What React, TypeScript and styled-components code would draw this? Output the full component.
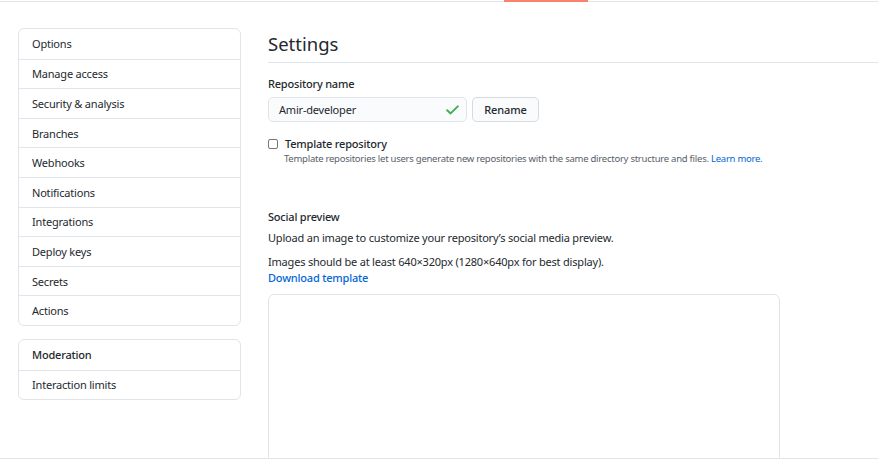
import React from "react";
import styled, { createGlobalStyle } from "styled-components";

const Global = createGlobalStyle`
  html, body { margin: 0; padding: 0; background: #fff; }
  body {
    font-family: "Noto Sans", "Open Sans", "Liberation Sans", sans-serif;
    color: #24292e;
    -webkit-font-smoothing: antialiased;
  }
  * { box-sizing: border-box; }
`;

const Page = styled.div`
  width: 878px;
  height: 459px;
  border-bottom: 1px solid #e1e4e8;
  overflow: hidden;
`;

const TopBar = styled.div`
  display: flex;
  height: 2px;
  padding-left: 504px;
  box-shadow: inset 0 -1px 0 #e1e4e8;
`;

const TabIndicator = styled.div`
  width: 84px;
  height: 2px;
  background: #f9826c;
`;

const Layout = styled.div`
  display: flex;
  align-items: flex-start;
  gap: 27px;
  padding: 26px 0 0 18px;
`;

const Sidebar = styled.nav`
  width: 223px;
  flex: none;
  display: flex;
  flex-direction: column;
  gap: 13px;
`;

const MenuBox = styled.div`
  border: 1px solid #e1e4e8;
  border-radius: 6px;
  overflow: hidden;
`;

const MenuItem = styled.div<{ $heading?: boolean }>`
  height: 29.6px;
  display: flex;
  align-items: center;
  padding-left: 13px;
  font-size: 11px;
  letter-spacing: -0.2px;
  font-weight: ${(p) => (p.$heading ? 500 : 400)};
  color: #24292e;
  & + & { border-top: 1px solid #e1e4e8; }
`;

const Content = styled.main`
  flex: 1;
  min-width: 0;
`;

const Title = styled.h2`
  margin: 0;
  font-size: 18.5px;
  font-weight: 400;
  line-height: 30px;
  padding: 1px 0 3px;
  border-bottom: 1px solid #e1e4e8;
`;

const Label = styled.div<{ $mt?: number }>`
  margin-top: ${(p) => (p.$mt ?? 12)}px;
  font-size: 11px;
  letter-spacing: -0.2px;
  font-weight: 500;
  line-height: 18px;
`;

const NameRow = styled.div`
  display: flex;
  gap: 5px;
  margin-top: 4px;
`;

const InputWrap = styled.div`
  width: 199px;
  height: 25px;
  display: flex;
  align-items: center;
  justify-content: space-between;
  padding: 0 7px 0 10px;
  background: #fafbfc;
  border: 1px solid #e1e4e8;
  border-radius: 5px;
  font-size: 11px;
  letter-spacing: -0.2px;
`;

const Button = styled.button`
  height: 25px;
  width: 67px;
  padding: 0;
  font-family: inherit;
  font-size: 11px;
  letter-spacing: -0.1px;
  font-weight: 500;
  color: #24292e;
  background: #fafbfc;
  border: 1px solid rgba(27, 31, 35, 0.15);
  border-radius: 5px;
`;

const CheckRow = styled.label`
  display: flex;
  align-items: center;
  gap: 7px;
  margin-top: 13px;
  font-size: 11px;
  letter-spacing: -0.2px;
  font-weight: 500;
  line-height: 18px;
`;

const Box = styled.span`
  width: 10px;
  height: 10px;
  border: 1px solid #767676;
  border-radius: 2px;
  flex: none;
`;

const Note = styled.p`
  margin: 0 0 0 16px;
  font-size: 9.5px;
  letter-spacing: -0.25px;
  line-height: 12px;
  color: #586069;
`;

const Link = styled.a<{ $bold?: boolean }>`
  color: #0366d6;
  text-decoration: none;
  font-weight: ${(p) => (p.$bold ? 500 : 400)};
`;

const Section = styled.div`
  margin-top: 43px;
`;

const Para = styled.p<{ $mt: number }>`
  margin: ${(p) => p.$mt}px 0 0;
  font-size: 11px;
  letter-spacing: -0.2px;
  line-height: 16px;
`;

const Preview = styled.div`
  width: 512px;
  height: 200px;
  margin-top: 8px;
  border: 1px solid #e1e4e8;
  border-radius: 6px;
`;

const mainItems = [
  "Options",
  "Manage access",
  "Security & analysis",
  "Branches",
  "Webhooks",
  "Notifications",
  "Integrations",
  "Deploy keys",
  "Secrets",
  "Actions",
];

const Check = () => (
  <svg width="13" height="10" viewBox="0 0 13 10" aria-hidden>
    <path d="M1.2 5.2 L4.6 8.4 L11.8 1.4" fill="none" stroke="#3fb14f" strokeWidth="2" strokeLinecap="round" strokeLinejoin="round" />
  </svg>
);

export default function App() {
  return (
    <>
      <Global />
      <Page>
        <TopBar>
          <TabIndicator />
        </TopBar>
        <Layout>
          <Sidebar>
            <MenuBox>
              {mainItems.map((t) => (
                <MenuItem key={t}>{t}</MenuItem>
              ))}
            </MenuBox>
            <MenuBox>
              <MenuItem $heading>Moderation</MenuItem>
              <MenuItem>Interaction limits</MenuItem>
            </MenuBox>
          </Sidebar>
          <Content>
            <Title>Settings</Title>
            <Label>Repository name</Label>
            <NameRow>
              <InputWrap>
                <span>Amir-developer</span>
                <Check />
              </InputWrap>
              <Button>Rename</Button>
            </NameRow>
            <CheckRow>
              <Box />
              Template repository
            </CheckRow>
            <Note>
              Template repositories let users generate new repositories with the same directory structure and files.{" "}
              <Link href="#">Learn more.</Link>
            </Note>
            <Section>
              <Label $mt={0}>Social preview</Label>
              <Para $mt={4}>Upload an image to customize your repository’s social media preview.</Para>
              <Para $mt={8}>Images should be at least 640×320px (1280×640px for best display).</Para>
              <Para $mt={0}>
                <Link href="#" $bold>Download template</Link>
              </Para>
              <Preview />
            </Section>
          </Content>
        </Layout>
      </Page>
    </>
  );
}
